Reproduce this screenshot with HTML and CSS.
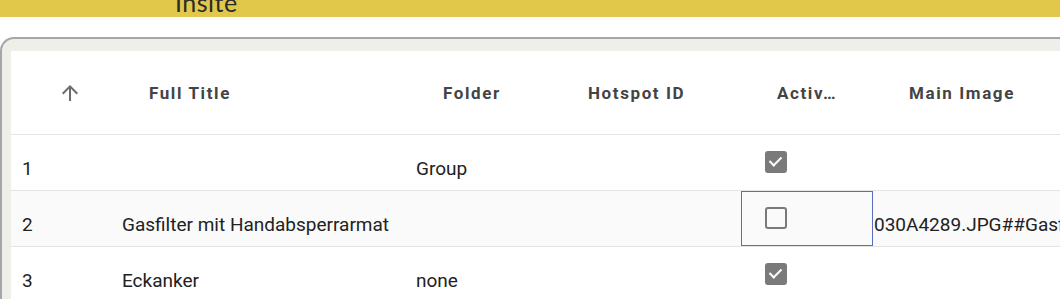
FILE: index.html
```html
<!DOCTYPE html>
<html lang="en">
<head>
	<meta charset="UTF-8"/>
	<title>Insite - Hotspots</title>
	<link rel="stylesheet" href="styles.css">
</head>
<body>
	<!-- Brand bar -->
	<div class="brandbar">
		<span class="brand">Insite</span>
	</div>
	<!-- Card holding the data grid -->
	<div class="card">
		<div class="grid">
			<div class="row head">
				<div class="cell c0">
					<svg class="sort" width="24" height="24" viewBox="0 0 24 24"><path d="M4 12l1.41 1.41L11 7.83V20h2V7.83l5.58 5.59L20 12l-8-8-8 8z" fill="#6b6b6b"/></svg>
				</div>
				<div class="cell c1">Full Title</div>
				<div class="cell c2">Folder</div>
				<div class="cell c3">Hotspot ID</div>
				<div class="cell c4">Activ…</div>
				<div class="cell c5">Main Image</div>
			</div>
			<div class="row">
				<div class="cell c0">1</div>
				<div class="cell c1"></div>
				<div class="cell c2">Group</div>
				<div class="cell c3"></div>
				<div class="cell c4"><span class="box checked"></span></div>
				<div class="cell c5"></div>
			</div>
			<div class="row alt">
				<div class="cell c0">2</div>
				<div class="cell c1">Gasfilter mit Handabsperrarmat</div>
				<div class="cell c2"></div>
				<div class="cell c3"></div>
				<div class="cell c4 focus"><span class="box"></span></div>
				<div class="cell c5">030A4289.JPG##Gasfilter</div>
			</div>
			<div class="row">
				<div class="cell c0">3</div>
				<div class="cell c1">Eckanker</div>
				<div class="cell c2">none</div>
				<div class="cell c3"></div>
				<div class="cell c4"><span class="box checked"></span></div>
				<div class="cell c5"></div>
			</div>
		</div>
	</div>
</body>
</html>
```

FILE: styles.css
```css
	/* Page base */
	body {
		margin: 0;
		width: 1060px;
		height: 299px;
		overflow: hidden;
		background: #fff;
		font-family: Roboto, "Liberation Sans", sans-serif;
		color: #222;
	}
	/* Yellow brand bar, title partly scrolled out of view */
	.brandbar {
		height: 17px;
		background-color: #e1c84b;
		overflow: hidden;
		padding-left: 175px;
	}
	.brand {
		display: block;
		font-family: Lato, sans-serif;
		font-size: 25px;
		line-height: 25px;
		margin-top: -10px;
		color: #2b2b2b;
		letter-spacing: 0.5px;
	}
	/* Card around the grid */
	.card {
		margin-top: 20px;
		width: 1100px;
		height: 270px;
		border-top: 2px solid #a6a6aa;
		border-left: 2px solid #a6a6aa;
		border-top-left-radius: 14px;
		background-color: #efefe9;
		padding: 12px 0 0 9px;
	}
	.grid {
		background: #fff;
		height: 100%;
	}
	.row {
		display: grid;
		grid-template-columns: 100px 294px 145px 191px 132px 1fr;
		height: 55px;
		border-bottom: 1px solid #e4e4e4;
		font-size: 19px;
	}
	.row.alt {
		background-color: #fafafa;
	}
	/* Header row */
	.row.head {
		height: 83px;
		font-size: 17px;
		font-weight: bold;
		letter-spacing: 1.6px;
		color: #444;
	}
	.cell {
		padding: 22px 0 0 11px;
		line-height: 24px;
		white-space: nowrap;
		overflow: hidden;
	}
	.head .cell {
		padding: 0;
		display: flex;
		align-items: center;
	}
	.head .c0 { padding-left: 47px; }
	.head .c1 { padding-left: 38px; }
	.head .c2 { padding-left: 38px; }
	.head .c3 { padding-left: 38px; }
	.head .c4 { padding-left: 36px; }
	.head .c5 { padding-left: 36px; }
	.c5 { padding-left: 1px; }
	/* Checkbox column */
	.c4 {
		padding: 16px 0 0 24px;
	}
	.c4.focus {
		outline: 1px solid #5c6bc0;
		outline-offset: -1px;
	}
	.box {
		display: block;
		width: 18px;
		height: 18px;
		border: 2px solid #7a7a7a;
		border-radius: 3px;
		position: relative;
	}
	.box.checked {
		background-color: #7a7a7a;
	}
	.box.checked::after {
		content: "";
		position: absolute;
		left: 5px;
		top: 1px;
		width: 5px;
		height: 10px;
		border: solid #fff;
		border-width: 0 2px 2px 0;
		transform: rotate(45deg);
	}
```
